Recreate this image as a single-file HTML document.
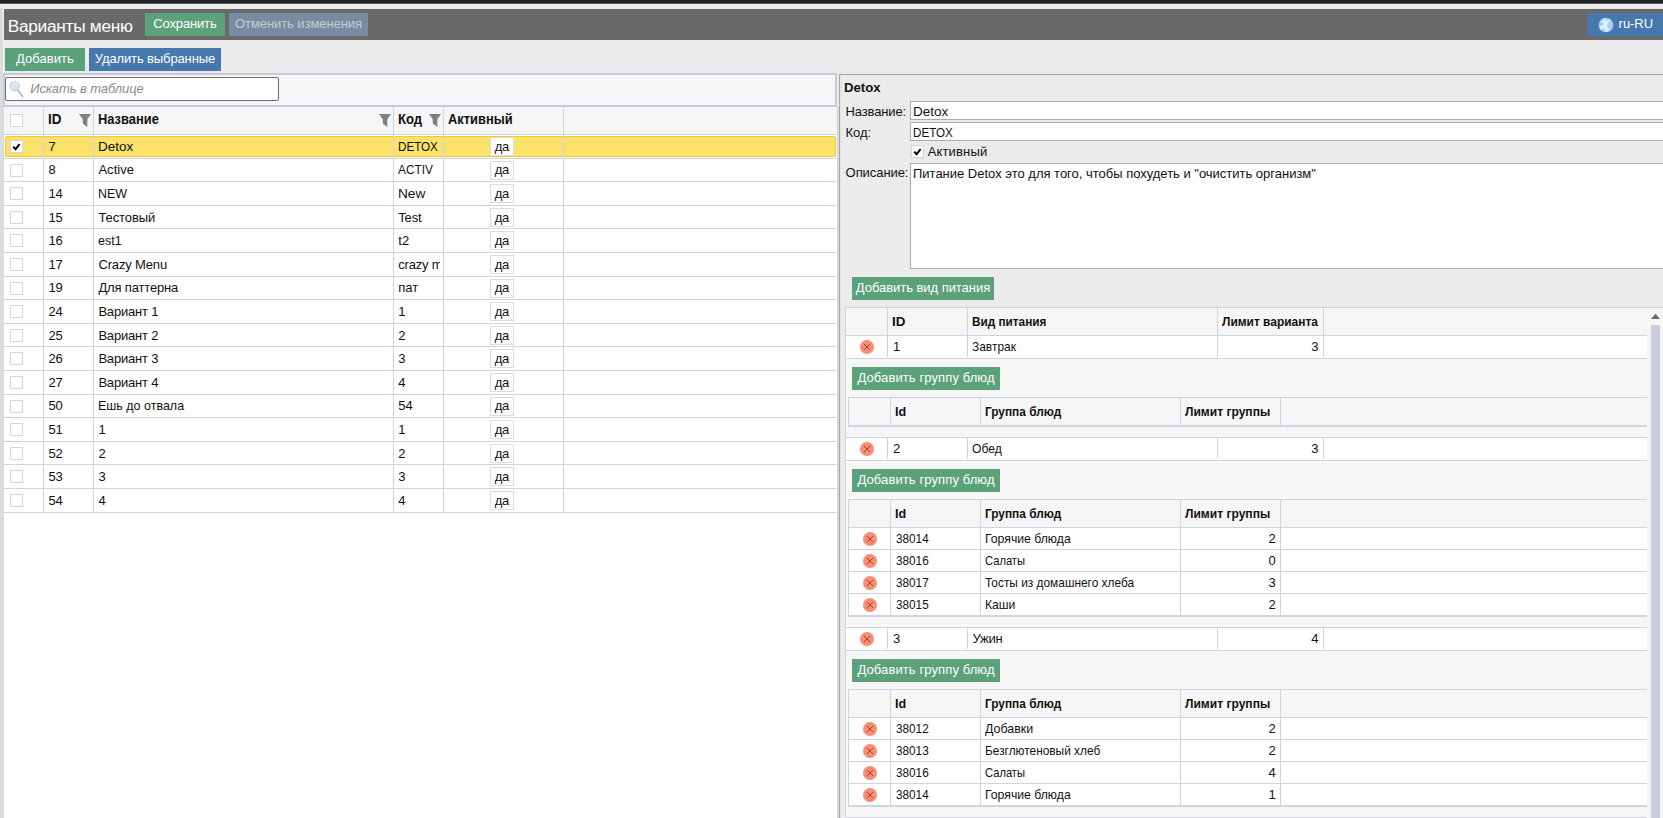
<!DOCTYPE html>
<html lang="ru"><head><meta charset="utf-8"><title>Варианты меню</title>
<style>
html,body{margin:0;padding:0}
body{width:1663px;height:818px;overflow:hidden;position:relative;background:#ebebeb;font-family:"Liberation Sans", sans-serif;font-size:13px;color:#111}
body div,body svg{position:absolute}
.t{white-space:nowrap;font-size:13px;line-height:15.6px}
</style></head><body>
<div style="left:0px;top:0px;width:1663px;height:3px;background:#202427;"></div>
<div style="left:0px;top:3px;width:1663px;height:1px;background:#505356;"></div>
<div style="left:0px;top:4px;width:1663px;height:1px;background:#f7f7f7;"></div>
<div style="left:0px;top:8px;width:3px;height:810px;background:#dcdcdc;"></div>
<div style="left:3px;top:8px;width:1px;height:65px;background:#f3f3f3;"></div>
<div style="left:4px;top:9px;width:1659px;height:31px;background:#696969;"></div>
<div class="t" style="top:15.63px;line-height:20.76px;font-size:17.3px;left:7.7px;color:#fff;letter-spacing:-0.284px;">Варианты меню</div>
<div style="left:145px;top:13px;width:80px;height:23px;background:#5ba17a;"></div>
<div class="t" style="top:16px;left:145px;width:80px;text-align:center;text-indent:-0.151px;color:#fff;letter-spacing:-0.151px;">Сохранить</div>
<div style="left:229px;top:13px;width:139px;height:23px;background:#798ba2;"></div>
<div class="t" style="top:16px;left:229px;width:139px;text-align:center;text-indent:-0.07px;color:#c6cad2;letter-spacing:-0.07px;">Отменить изменения</div>
<div style="left:1587px;top:13px;width:76px;height:23px;background:#4677ad;"></div>
<svg style="left:1598px;top:16.65px" width="16" height="16" viewBox="0 0 16 16"><circle cx="8" cy="8" r="7.3" fill="#9dcffb"/><path d="M5.56 1.89 L7.27 1.89 L7.51 4.09 L8.24 4.58 L9.71 3.11 L11.18 2.87 L11.42 3.84 L10.2 5.8 L9.22 8 L8.73 9.47 L10.2 10.93 L11.18 12.4 L10.2 13.87 L8.24 14.6 L6.78 14.36 L7.51 12.4 L6.29 11.42 L4.58 10.93 L3.6 11.42 L3.84 12.89 L2.87 12.4 L1.64 10.44 L2.62 9.22 L4.33 8.49 L5.8 7.02 L6.29 5.8 L4.82 5.31 L3.6 5.56 L3.6 4.58 L4.82 3.6 Z" fill="#e2f1fd" stroke="#e2f1fd" stroke-width="0.5" stroke-linejoin="round"/></svg>
<div class="t" style="top:16px;left:1618.6px;color:#fff;letter-spacing:-0.043px;">ru-RU</div>
<div style="left:5px;top:48px;width:80px;height:23px;background:#5ba17a;"></div>
<div class="t" style="top:51px;left:5px;width:80px;text-align:center;text-indent:0.05px;color:#fff;letter-spacing:0.05px;">Добавить</div>
<div style="left:89px;top:48px;width:132px;height:23px;background:#4677ad;"></div>
<div class="t" style="top:51px;left:89px;width:132px;text-align:center;text-indent:-0.121px;color:#fff;letter-spacing:-0.121px;">Удалить выбранные</div>
<div style="left:4px;top:73px;width:833px;height:745px;background:#fff;"></div>
<div style="left:3px;top:73px;width:834px;height:34px;background:#f6f6f6;box-sizing:border-box;border:2px solid #c7cbdd;"></div>
<div style="left:5px;top:77px;width:274px;height:24px;background:#fff;box-sizing:border-box;border:1px solid #6f6f6f;border-radius:2px;"></div>
<svg style="left:8px;top:79px" width="18" height="20" viewBox="0 0 18 20"><path d="M9.5 10.5 L14.5 17.5" stroke="#b9b9b9" stroke-width="1.8" stroke-linecap="round"/><circle cx="6.7" cy="7.1" r="4.6" fill="#d8e8f6" stroke="#c6c9cc" stroke-width="1.1"/></svg>
<div class="t" style="top:81px;left:30.2px;color:#8a8a8a;letter-spacing:-0.094px;font-style:italic;">Искать в таблице</div>
<div style="left:4px;top:107px;width:833px;height:27px;background:#f6f6f6;"></div>
<div style="left:4px;top:134px;width:832px;height:1px;background:#d0d3e2;"></div>
<div style="left:3px;top:107px;width:1px;height:711px;background:#d6d9e7;"></div>
<div style="left:837px;top:107px;width:1px;height:711px;background:#cdd0e0;"></div>
<div style="left:838px;top:107px;width:1px;height:711px;background:#dddddd;"></div>
<div style="left:10px;top:114px;width:11px;height:11px;background:#fff;border:1px solid #d3d5e2;"></div>
<div class="t" style="top:110.75px;line-height:16.8px;font-size:14px;left:48.4px;font-weight:bold;transform:scaleX(0.9571);transform-origin:0 0;">ID</div>
<svg style="left:79px;top:114px" width="13" height="14" viewBox="0 0 13 14"><path d="M0 0 H12 L8.3 5.2 V13 L3.8 9.6 V5.2 Z" fill="#7f7f7f"/></svg>
<div class="t" style="top:110.75px;line-height:16.8px;font-size:14px;left:97.8px;font-weight:bold;transform:scaleX(0.9199);transform-origin:0 0;">Название</div>
<svg style="left:379px;top:114px" width="13" height="14" viewBox="0 0 13 14"><path d="M0 0 H12 L8.3 5.2 V13 L3.8 9.6 V5.2 Z" fill="#7f7f7f"/></svg>
<div class="t" style="top:110.75px;line-height:16.8px;font-size:14px;left:397.8px;font-weight:bold;transform:scaleX(0.9375);transform-origin:0 0;">Код</div>
<svg style="left:429px;top:114px" width="13" height="14" viewBox="0 0 13 14"><path d="M0 0 H12 L8.3 5.2 V13 L3.8 9.6 V5.2 Z" fill="#7f7f7f"/></svg>
<div class="t" style="top:110.75px;line-height:16.8px;font-size:14px;left:447.6px;font-weight:bold;transform:scaleX(0.92);transform-origin:0 0;">Активный</div>
<div style="left:5px;top:136px;width:831px;height:21px;background:#fbe36b;box-sizing:border-box;border:1px solid #fcc52f;border-radius:2px;"></div>
<div style="left:4px;top:158px;width:832px;height:1px;background:#d0d3e2;"></div>
<div style="left:10px;top:140px;width:11px;height:11px;background:#fff;border:1px solid #d3d5e2;"><svg width="13" height="13" viewBox="0 0 13 13" style="left:-1px;top:-1px"><path d="M3.2 6.6 L5.6 9.2 L9.6 4.2" stroke="#000" stroke-width="2" fill="none"/></svg></div>
<div class="t" style="top:139px;left:48.4px;">7</div>
<div class="t" style="top:139px;left:98.4px;transform:scaleX(1.0362);transform-origin:0 0;">Detox</div>
<div class="t" style="top:139px;left:398.3px;width:46.91px;overflow:hidden;transform:scaleX(0.8954);transform-origin:0 0;">DETOX</div>
<div style="left:490px;top:137px;width:24px;height:19px;background:#fff;box-sizing:border-box;border:1px solid #dcdcdc;"></div>
<div class="t" style="top:139px;left:490px;width:24px;text-align:center;text-indent:-0.228px;letter-spacing:-0.228px;">да</div>
<div style="left:4px;top:181px;width:832px;height:1px;background:#d0d3e2;"></div>
<div style="left:10px;top:164px;width:11px;height:11px;background:#fff;border:1px solid #d3d5e2;"></div>
<div class="t" style="top:162px;left:48.4px;">8</div>
<div class="t" style="top:162px;left:98.4px;letter-spacing:0.039px;">Active</div>
<div class="t" style="top:162px;left:398.3px;width:46.09px;overflow:hidden;transform:scaleX(0.9113);transform-origin:0 0;">ACTIV</div>
<div style="left:490px;top:161px;width:24px;height:19px;background:#fff;box-sizing:border-box;border:1px solid #dcdcdc;"></div>
<div class="t" style="top:162px;left:490px;width:24px;text-align:center;text-indent:-0.228px;letter-spacing:-0.228px;">да</div>
<div style="left:4px;top:205px;width:832px;height:1px;background:#d0d3e2;"></div>
<div style="left:10px;top:187px;width:11px;height:11px;background:#fff;border:1px solid #d3d5e2;"></div>
<div class="t" style="top:186px;left:48.4px;">14</div>
<div class="t" style="top:186px;left:98.4px;transform:scaleX(0.959);transform-origin:0 0;">NEW</div>
<div class="t" style="top:186px;left:398.3px;width:40.02px;overflow:hidden;transform:scaleX(1.0494);transform-origin:0 0;">New</div>
<div style="left:490px;top:184px;width:24px;height:19px;background:#fff;box-sizing:border-box;border:1px solid #dcdcdc;"></div>
<div class="t" style="top:186px;left:490px;width:24px;text-align:center;text-indent:-0.228px;letter-spacing:-0.228px;">да</div>
<div style="left:4px;top:228px;width:832px;height:1px;background:#d0d3e2;"></div>
<div style="left:10px;top:211px;width:11px;height:11px;background:#fff;border:1px solid #d3d5e2;"></div>
<div class="t" style="top:210px;left:48.4px;">15</div>
<div class="t" style="top:210px;left:98.4px;letter-spacing:-0.086px;">Тестовый</div>
<div class="t" style="top:210px;left:398.3px;width:42.0px;overflow:hidden;letter-spacing:-0.181px;">Test</div>
<div style="left:490px;top:208px;width:24px;height:19px;background:#fff;box-sizing:border-box;border:1px solid #dcdcdc;"></div>
<div class="t" style="top:210px;left:490px;width:24px;text-align:center;text-indent:-0.228px;letter-spacing:-0.228px;">да</div>
<div style="left:4px;top:252px;width:832px;height:1px;background:#d0d3e2;"></div>
<div style="left:10px;top:234px;width:11px;height:11px;background:#fff;border:1px solid #d3d5e2;"></div>
<div class="t" style="top:233px;left:48.4px;">16</div>
<div class="t" style="top:233px;left:98.4px;transform:scaleX(0.9602);transform-origin:0 0;">est1</div>
<div class="t" style="top:233px;left:398.3px;width:42.0px;overflow:hidden;">t2</div>
<div style="left:490px;top:231px;width:24px;height:19px;background:#fff;box-sizing:border-box;border:1px solid #dcdcdc;"></div>
<div class="t" style="top:233px;left:490px;width:24px;text-align:center;text-indent:-0.228px;letter-spacing:-0.228px;">да</div>
<div style="left:4px;top:276px;width:832px;height:1px;background:#d0d3e2;"></div>
<div style="left:10px;top:258px;width:11px;height:11px;background:#fff;border:1px solid #d3d5e2;"></div>
<div class="t" style="top:257px;left:48.4px;">17</div>
<div class="t" style="top:257px;left:98.4px;letter-spacing:-0.142px;">Crazy Menu</div>
<div class="t" style="top:257px;left:398.3px;width:42.0px;overflow:hidden;letter-spacing:-0.217px;">crazy m</div>
<div style="left:490px;top:255px;width:24px;height:19px;background:#fff;box-sizing:border-box;border:1px solid #dcdcdc;"></div>
<div class="t" style="top:257px;left:490px;width:24px;text-align:center;text-indent:-0.228px;letter-spacing:-0.228px;">да</div>
<div style="left:4px;top:299px;width:832px;height:1px;background:#d0d3e2;"></div>
<div style="left:10px;top:282px;width:11px;height:11px;background:#fff;border:1px solid #d3d5e2;"></div>
<div class="t" style="top:280px;left:48.4px;">19</div>
<div class="t" style="top:280px;left:98.4px;letter-spacing:-0.16px;">Для паттерна</div>
<div class="t" style="top:280px;left:398.3px;width:42.0px;overflow:hidden;">пат</div>
<div style="left:490px;top:279px;width:24px;height:19px;background:#fff;box-sizing:border-box;border:1px solid #dcdcdc;"></div>
<div class="t" style="top:280px;left:490px;width:24px;text-align:center;text-indent:-0.228px;letter-spacing:-0.228px;">да</div>
<div style="left:4px;top:323px;width:832px;height:1px;background:#d0d3e2;"></div>
<div style="left:10px;top:305px;width:11px;height:11px;background:#fff;border:1px solid #d3d5e2;"></div>
<div class="t" style="top:304px;left:48.4px;">24</div>
<div class="t" style="top:304px;left:98.4px;letter-spacing:-0.189px;">Вариант 1</div>
<div class="t" style="top:304px;left:398.3px;width:42.0px;overflow:hidden;">1</div>
<div style="left:490px;top:302px;width:24px;height:19px;background:#fff;box-sizing:border-box;border:1px solid #dcdcdc;"></div>
<div class="t" style="top:304px;left:490px;width:24px;text-align:center;text-indent:-0.228px;letter-spacing:-0.228px;">да</div>
<div style="left:4px;top:346px;width:832px;height:1px;background:#d0d3e2;"></div>
<div style="left:10px;top:329px;width:11px;height:11px;background:#fff;border:1px solid #d3d5e2;"></div>
<div class="t" style="top:328px;left:48.4px;">25</div>
<div class="t" style="top:328px;left:98.4px;letter-spacing:-0.189px;">Вариант 2</div>
<div class="t" style="top:328px;left:398.3px;width:42.0px;overflow:hidden;">2</div>
<div style="left:490px;top:326px;width:24px;height:19px;background:#fff;box-sizing:border-box;border:1px solid #dcdcdc;"></div>
<div class="t" style="top:328px;left:490px;width:24px;text-align:center;text-indent:-0.228px;letter-spacing:-0.228px;">да</div>
<div style="left:4px;top:370px;width:832px;height:1px;background:#d0d3e2;"></div>
<div style="left:10px;top:352px;width:11px;height:11px;background:#fff;border:1px solid #d3d5e2;"></div>
<div class="t" style="top:351px;left:48.4px;">26</div>
<div class="t" style="top:351px;left:98.4px;letter-spacing:-0.189px;">Вариант 3</div>
<div class="t" style="top:351px;left:398.3px;width:42.0px;overflow:hidden;">3</div>
<div style="left:490px;top:349px;width:24px;height:19px;background:#fff;box-sizing:border-box;border:1px solid #dcdcdc;"></div>
<div class="t" style="top:351px;left:490px;width:24px;text-align:center;text-indent:-0.228px;letter-spacing:-0.228px;">да</div>
<div style="left:4px;top:394px;width:832px;height:1px;background:#d0d3e2;"></div>
<div style="left:10px;top:376px;width:11px;height:11px;background:#fff;border:1px solid #d3d5e2;"></div>
<div class="t" style="top:375px;left:48.4px;">27</div>
<div class="t" style="top:375px;left:98.4px;letter-spacing:-0.189px;">Вариант 4</div>
<div class="t" style="top:375px;left:398.3px;width:42.0px;overflow:hidden;">4</div>
<div style="left:490px;top:373px;width:24px;height:19px;background:#fff;box-sizing:border-box;border:1px solid #dcdcdc;"></div>
<div class="t" style="top:375px;left:490px;width:24px;text-align:center;text-indent:-0.228px;letter-spacing:-0.228px;">да</div>
<div style="left:4px;top:417px;width:832px;height:1px;background:#d0d3e2;"></div>
<div style="left:10px;top:400px;width:11px;height:11px;background:#fff;border:1px solid #d3d5e2;"></div>
<div class="t" style="top:398px;left:48.4px;">50</div>
<div class="t" style="top:398px;left:98.4px;transform:scaleX(0.9607);transform-origin:0 0;">Ешь до отвала</div>
<div class="t" style="top:398px;left:398.3px;width:42.0px;overflow:hidden;">54</div>
<div style="left:490px;top:397px;width:24px;height:19px;background:#fff;box-sizing:border-box;border:1px solid #dcdcdc;"></div>
<div class="t" style="top:398px;left:490px;width:24px;text-align:center;text-indent:-0.228px;letter-spacing:-0.228px;">да</div>
<div style="left:4px;top:441px;width:832px;height:1px;background:#d0d3e2;"></div>
<div style="left:10px;top:423px;width:11px;height:11px;background:#fff;border:1px solid #d3d5e2;"></div>
<div class="t" style="top:422px;left:48.4px;">51</div>
<div class="t" style="top:422px;left:98.4px;">1</div>
<div class="t" style="top:422px;left:398.3px;width:42.0px;overflow:hidden;">1</div>
<div style="left:490px;top:420px;width:24px;height:19px;background:#fff;box-sizing:border-box;border:1px solid #dcdcdc;"></div>
<div class="t" style="top:422px;left:490px;width:24px;text-align:center;text-indent:-0.228px;letter-spacing:-0.228px;">да</div>
<div style="left:4px;top:464px;width:832px;height:1px;background:#d0d3e2;"></div>
<div style="left:10px;top:447px;width:11px;height:11px;background:#fff;border:1px solid #d3d5e2;"></div>
<div class="t" style="top:446px;left:48.4px;">52</div>
<div class="t" style="top:446px;left:98.4px;">2</div>
<div class="t" style="top:446px;left:398.3px;width:42.0px;overflow:hidden;">2</div>
<div style="left:490px;top:444px;width:24px;height:19px;background:#fff;box-sizing:border-box;border:1px solid #dcdcdc;"></div>
<div class="t" style="top:446px;left:490px;width:24px;text-align:center;text-indent:-0.228px;letter-spacing:-0.228px;">да</div>
<div style="left:4px;top:488px;width:832px;height:1px;background:#d0d3e2;"></div>
<div style="left:10px;top:470px;width:11px;height:11px;background:#fff;border:1px solid #d3d5e2;"></div>
<div class="t" style="top:469px;left:48.4px;">53</div>
<div class="t" style="top:469px;left:98.4px;">3</div>
<div class="t" style="top:469px;left:398.3px;width:42.0px;overflow:hidden;">3</div>
<div style="left:490px;top:467px;width:24px;height:19px;background:#fff;box-sizing:border-box;border:1px solid #dcdcdc;"></div>
<div class="t" style="top:469px;left:490px;width:24px;text-align:center;text-indent:-0.228px;letter-spacing:-0.228px;">да</div>
<div style="left:4px;top:512px;width:832px;height:1px;background:#d0d3e2;"></div>
<div style="left:10px;top:494px;width:11px;height:11px;background:#fff;border:1px solid #d3d5e2;"></div>
<div class="t" style="top:493px;left:48.4px;">54</div>
<div class="t" style="top:493px;left:98.4px;">4</div>
<div class="t" style="top:493px;left:398.3px;width:42.0px;overflow:hidden;">4</div>
<div style="left:490px;top:491px;width:24px;height:19px;background:#fff;box-sizing:border-box;border:1px solid #dcdcdc;"></div>
<div class="t" style="top:493px;left:490px;width:24px;text-align:center;text-indent:-0.228px;letter-spacing:-0.228px;">да</div>
<div style="left:43px;top:107px;width:1px;height:406px;background:#d0d3e2;"></div>
<div style="left:93px;top:107px;width:1px;height:406px;background:#d0d3e2;"></div>
<div style="left:393px;top:107px;width:1px;height:406px;background:#d0d3e2;"></div>
<div style="left:443px;top:107px;width:1px;height:406px;background:#d0d3e2;"></div>
<div style="left:563px;top:107px;width:1px;height:406px;background:#d0d3e2;"></div>
<div style="left:839px;top:74px;width:824px;height:744px;background:#ebebeb;box-sizing:border-box;border-left:1px solid #a6a6a6;border-top:1px solid #a6a6a6;"></div>
<div style="left:840px;top:75px;width:1px;height:743px;background:#e2e2e2;"></div>
<div class="t" style="top:80px;left:844.3000000000001px;font-weight:bold;transform:scaleX(1.0131);transform-origin:0 0;">Detox</div>
<div class="t" style="top:104px;left:845.6px;letter-spacing:-0.14px;">Название:</div>
<div style="left:910px;top:101px;width:760px;height:19px;background:#fff;box-sizing:border-box;border:1px solid #a9abb4;"></div>
<div class="t" style="top:104px;left:913px;transform:scaleX(1.0362);transform-origin:0 0;">Detox</div>
<div class="t" style="top:125px;left:845.6px;letter-spacing:-0.106px;">Код:</div>
<div style="left:910px;top:122px;width:760px;height:19px;background:#fff;box-sizing:border-box;border:1px solid #a9abb4;"></div>
<div class="t" style="top:125px;left:913px;transform:scaleX(0.8954);transform-origin:0 0;">DETOX</div>
<div style="left:911px;top:145px;width:11px;height:11px;background:#fff;border:1px solid #d4d4d4;"><svg width="13" height="13" viewBox="0 0 13 13" style="left:-1px;top:-1px"><path d="M3.2 6.6 L5.6 9.2 L9.6 4.2" stroke="#000" stroke-width="2" fill="none"/></svg></div>
<div class="t" style="top:144px;left:927.7px;letter-spacing:0.154px;">Активный</div>
<div class="t" style="top:165px;left:845.6px;letter-spacing:-0.067px;">Описание:</div>
<div style="left:910px;top:163px;width:760px;height:106px;background:#fff;box-sizing:border-box;border:1px solid #a9abb4;"></div>
<div class="t" style="top:166px;left:913px;letter-spacing:-0.01px;">Питание Detox это для того, чтобы похудеть и "очистить организм"</div>
<div style="left:852px;top:277px;width:142px;height:23px;background:#5ba17a;"></div>
<div class="t" style="top:280px;left:852px;width:142px;text-align:center;text-indent:-0.045px;color:#fff;letter-spacing:-0.045px;">Добавить вид питания</div>
<div style="left:845px;top:307px;width:818px;height:511px;background:#f6f6f6;"></div>
<div style="left:845px;top:307px;width:818px;height:1px;background:#d0d3e2;"></div>
<div style="left:845px;top:307px;width:1px;height:511px;background:#d0d3e2;"></div>
<div style="left:846px;top:335px;width:801px;height:1px;background:#d0d3e2;"></div>
<div style="left:887px;top:308px;width:1px;height:27px;background:#d0d3e2;"></div>
<div style="left:967px;top:308px;width:1px;height:27px;background:#d0d3e2;"></div>
<div style="left:1217px;top:308px;width:1px;height:27px;background:#d0d3e2;"></div>
<div style="left:1323px;top:308px;width:1px;height:27px;background:#d0d3e2;"></div>
<div class="t" style="top:314px;left:892.4px;font-weight:bold;transform:scaleX(1.0308);transform-origin:0 0;">ID</div>
<div class="t" style="top:314px;left:972.4px;font-weight:bold;transform:scaleX(0.9059);transform-origin:0 0;">Вид питания</div>
<div class="t" style="top:314px;left:1222.1px;font-weight:bold;transform:scaleX(0.9198);transform-origin:0 0;">Лимит варианта</div>
<div style="left:846px;top:335px;width:801px;height:1px;background:#d0d3e2;"></div>
<div style="left:846px;top:336px;width:801px;height:22px;background:#fff;"></div>
<div style="left:846px;top:358px;width:801px;height:1px;background:#d0d3e2;"></div>
<div style="left:887px;top:336px;width:1px;height:21px;background:#d0d3e2;"></div>
<div style="left:967px;top:336px;width:1px;height:21px;background:#d0d3e2;"></div>
<div style="left:1217px;top:336px;width:1px;height:21px;background:#d0d3e2;"></div>
<div style="left:1323px;top:336px;width:1px;height:21px;background:#d0d3e2;"></div>
<svg style="left:859px;top:339px" width="16" height="16" viewBox="0 0 16 16"><circle cx="8" cy="8" r="7" fill="#fb8c73"/><path d="M5 5 L11 11 M11 5 L5 11" stroke="#8a4a3c" stroke-width="1" fill="none"/></svg>
<div class="t" style="top:339px;left:893px;">1</div>
<div class="t" style="top:339px;left:972.4px;transform:scaleX(0.9182);transform-origin:0 0;">Завтрак</div>
<div class="t" style="top:339px;left:1018.4000000000001px;width:300px;text-align:right;">3</div>
<div style="left:852px;top:367px;width:148px;height:23px;background:#5ba17a;"></div>
<div class="t" style="top:370px;left:852px;width:148px;text-align:center;text-indent:0.106px;color:#fff;letter-spacing:0.106px;">Добавить группу блюд</div>
<div style="left:848px;top:397px;width:799px;height:1px;background:#d0d3e2;"></div>
<div style="left:848px;top:397px;width:1px;height:30px;background:#d0d3e2;"></div>
<div style="left:890px;top:398px;width:1px;height:27px;background:#d0d3e2;"></div>
<div style="left:980px;top:398px;width:1px;height:27px;background:#d0d3e2;"></div>
<div style="left:1180px;top:398px;width:1px;height:27px;background:#d0d3e2;"></div>
<div style="left:1280px;top:398px;width:1px;height:27px;background:#d0d3e2;"></div>
<div class="t" style="top:404px;left:895.3000000000001px;font-weight:bold;transform:scaleX(0.9686);transform-origin:0 0;">Id</div>
<div class="t" style="top:404px;left:985.2px;font-weight:bold;transform:scaleX(0.9117);transform-origin:0 0;">Группа блюд</div>
<div class="t" style="top:404px;left:1185.1px;font-weight:bold;transform:scaleX(0.9269);transform-origin:0 0;">Лимит группы</div>
<div style="left:848px;top:425px;width:799px;height:1px;background:#d0d3e2;"></div>
<div style="left:848px;top:426px;width:799px;height:1px;background:#d0d3e2;"></div>
<div style="left:846px;top:437px;width:801px;height:1px;background:#d0d3e2;"></div>
<div style="left:846px;top:438px;width:801px;height:22px;background:#fff;"></div>
<div style="left:846px;top:460px;width:801px;height:1px;background:#d0d3e2;"></div>
<div style="left:887px;top:438px;width:1px;height:21px;background:#d0d3e2;"></div>
<div style="left:967px;top:438px;width:1px;height:21px;background:#d0d3e2;"></div>
<div style="left:1217px;top:438px;width:1px;height:21px;background:#d0d3e2;"></div>
<div style="left:1323px;top:438px;width:1px;height:21px;background:#d0d3e2;"></div>
<svg style="left:859px;top:441px" width="16" height="16" viewBox="0 0 16 16"><circle cx="8" cy="8" r="7" fill="#fb8c73"/><path d="M5 5 L11 11 M11 5 L5 11" stroke="#8a4a3c" stroke-width="1" fill="none"/></svg>
<div class="t" style="top:441px;left:893px;">2</div>
<div class="t" style="top:441px;left:972.4px;transform:scaleX(0.9326);transform-origin:0 0;">Обед</div>
<div class="t" style="top:441px;left:1018.4000000000001px;width:300px;text-align:right;">3</div>
<div style="left:852px;top:469px;width:148px;height:23px;background:#5ba17a;"></div>
<div class="t" style="top:472px;left:852px;width:148px;text-align:center;text-indent:0.106px;color:#fff;letter-spacing:0.106px;">Добавить группу блюд</div>
<div style="left:848px;top:499px;width:799px;height:1px;background:#d0d3e2;"></div>
<div style="left:848px;top:499px;width:1px;height:118px;background:#d0d3e2;"></div>
<div style="left:890px;top:500px;width:1px;height:27px;background:#d0d3e2;"></div>
<div style="left:980px;top:500px;width:1px;height:27px;background:#d0d3e2;"></div>
<div style="left:1180px;top:500px;width:1px;height:27px;background:#d0d3e2;"></div>
<div style="left:1280px;top:500px;width:1px;height:27px;background:#d0d3e2;"></div>
<div class="t" style="top:506px;left:895.3000000000001px;font-weight:bold;transform:scaleX(0.9686);transform-origin:0 0;">Id</div>
<div class="t" style="top:506px;left:985.2px;font-weight:bold;transform:scaleX(0.9117);transform-origin:0 0;">Группа блюд</div>
<div class="t" style="top:506px;left:1185.1px;font-weight:bold;transform:scaleX(0.9269);transform-origin:0 0;">Лимит группы</div>
<div style="left:848px;top:527px;width:799px;height:1px;background:#d0d3e2;"></div>
<div style="left:849px;top:528px;width:798px;height:21px;background:#fff;"></div>
<div style="left:848px;top:549px;width:799px;height:1px;background:#d0d3e2;"></div>
<div style="left:890px;top:528px;width:1px;height:21px;background:#d0d3e2;"></div>
<div style="left:980px;top:528px;width:1px;height:21px;background:#d0d3e2;"></div>
<div style="left:1180px;top:528px;width:1px;height:21px;background:#d0d3e2;"></div>
<div style="left:1280px;top:528px;width:1px;height:21px;background:#d0d3e2;"></div>
<svg style="left:862px;top:531px" width="16" height="16" viewBox="0 0 16 16"><circle cx="8" cy="8" r="7" fill="#fb8c73"/><path d="M5 5 L11 11 M11 5 L5 11" stroke="#8a4a3c" stroke-width="1" fill="none"/></svg>
<div class="t" style="top:531px;left:895.8px;transform:scaleX(0.9044);transform-origin:0 0;">38014</div>
<div class="t" style="top:531px;left:985.3px;transform:scaleX(0.9403);transform-origin:0 0;">Горячие блюда</div>
<div class="t" style="top:531px;left:975.7px;width:300px;text-align:right;">2</div>
<div style="left:849px;top:550px;width:798px;height:21px;background:#fff;"></div>
<div style="left:848px;top:571px;width:799px;height:1px;background:#d0d3e2;"></div>
<div style="left:890px;top:550px;width:1px;height:21px;background:#d0d3e2;"></div>
<div style="left:980px;top:550px;width:1px;height:21px;background:#d0d3e2;"></div>
<div style="left:1180px;top:550px;width:1px;height:21px;background:#d0d3e2;"></div>
<div style="left:1280px;top:550px;width:1px;height:21px;background:#d0d3e2;"></div>
<svg style="left:862px;top:553px" width="16" height="16" viewBox="0 0 16 16"><circle cx="8" cy="8" r="7" fill="#fb8c73"/><path d="M5 5 L11 11 M11 5 L5 11" stroke="#8a4a3c" stroke-width="1" fill="none"/></svg>
<div class="t" style="top:553px;left:895.8px;transform:scaleX(0.9044);transform-origin:0 0;">38016</div>
<div class="t" style="top:553px;left:985.3px;transform:scaleX(0.8585);transform-origin:0 0;">Салаты</div>
<div class="t" style="top:553px;left:975.7px;width:300px;text-align:right;">0</div>
<div style="left:849px;top:572px;width:798px;height:21px;background:#fff;"></div>
<div style="left:848px;top:593px;width:799px;height:1px;background:#d0d3e2;"></div>
<div style="left:890px;top:572px;width:1px;height:21px;background:#d0d3e2;"></div>
<div style="left:980px;top:572px;width:1px;height:21px;background:#d0d3e2;"></div>
<div style="left:1180px;top:572px;width:1px;height:21px;background:#d0d3e2;"></div>
<div style="left:1280px;top:572px;width:1px;height:21px;background:#d0d3e2;"></div>
<svg style="left:862px;top:575px" width="16" height="16" viewBox="0 0 16 16"><circle cx="8" cy="8" r="7" fill="#fb8c73"/><path d="M5 5 L11 11 M11 5 L5 11" stroke="#8a4a3c" stroke-width="1" fill="none"/></svg>
<div class="t" style="top:575px;left:895.8px;transform:scaleX(0.9044);transform-origin:0 0;">38017</div>
<div class="t" style="top:575px;left:985.3px;transform:scaleX(0.9143);transform-origin:0 0;">Тосты из домашнего хлеба</div>
<div class="t" style="top:575px;left:975.7px;width:300px;text-align:right;">3</div>
<div style="left:849px;top:594px;width:798px;height:21px;background:#fff;"></div>
<div style="left:848px;top:615px;width:799px;height:1px;background:#d0d3e2;"></div>
<div style="left:890px;top:594px;width:1px;height:21px;background:#d0d3e2;"></div>
<div style="left:980px;top:594px;width:1px;height:21px;background:#d0d3e2;"></div>
<div style="left:1180px;top:594px;width:1px;height:21px;background:#d0d3e2;"></div>
<div style="left:1280px;top:594px;width:1px;height:21px;background:#d0d3e2;"></div>
<svg style="left:862px;top:597px" width="16" height="16" viewBox="0 0 16 16"><circle cx="8" cy="8" r="7" fill="#fb8c73"/><path d="M5 5 L11 11 M11 5 L5 11" stroke="#8a4a3c" stroke-width="1" fill="none"/></svg>
<div class="t" style="top:597px;left:895.8px;transform:scaleX(0.9044);transform-origin:0 0;">38015</div>
<div class="t" style="top:597px;left:985.3px;transform:scaleX(0.9354);transform-origin:0 0;">Каши</div>
<div class="t" style="top:597px;left:975.7px;width:300px;text-align:right;">2</div>
<div style="left:848px;top:616px;width:799px;height:1px;background:#d0d3e2;"></div>
<div style="left:846px;top:627px;width:801px;height:1px;background:#d0d3e2;"></div>
<div style="left:846px;top:628px;width:801px;height:22px;background:#fff;"></div>
<div style="left:846px;top:650px;width:801px;height:1px;background:#d0d3e2;"></div>
<div style="left:887px;top:628px;width:1px;height:21px;background:#d0d3e2;"></div>
<div style="left:967px;top:628px;width:1px;height:21px;background:#d0d3e2;"></div>
<div style="left:1217px;top:628px;width:1px;height:21px;background:#d0d3e2;"></div>
<div style="left:1323px;top:628px;width:1px;height:21px;background:#d0d3e2;"></div>
<svg style="left:859px;top:631px" width="16" height="16" viewBox="0 0 16 16"><circle cx="8" cy="8" r="7" fill="#fb8c73"/><path d="M5 5 L11 11 M11 5 L5 11" stroke="#8a4a3c" stroke-width="1" fill="none"/></svg>
<div class="t" style="top:631px;left:893px;">3</div>
<div class="t" style="top:631px;left:972.4px;letter-spacing:-0.19px;">Ужин</div>
<div class="t" style="top:631px;left:1018.4000000000001px;width:300px;text-align:right;">4</div>
<div style="left:852px;top:659px;width:148px;height:23px;background:#5ba17a;"></div>
<div class="t" style="top:662px;left:852px;width:148px;text-align:center;text-indent:0.106px;color:#fff;letter-spacing:0.106px;">Добавить группу блюд</div>
<div style="left:848px;top:689px;width:799px;height:1px;background:#d0d3e2;"></div>
<div style="left:848px;top:689px;width:1px;height:118px;background:#d0d3e2;"></div>
<div style="left:890px;top:690px;width:1px;height:27px;background:#d0d3e2;"></div>
<div style="left:980px;top:690px;width:1px;height:27px;background:#d0d3e2;"></div>
<div style="left:1180px;top:690px;width:1px;height:27px;background:#d0d3e2;"></div>
<div style="left:1280px;top:690px;width:1px;height:27px;background:#d0d3e2;"></div>
<div class="t" style="top:696px;left:895.3000000000001px;font-weight:bold;transform:scaleX(0.9686);transform-origin:0 0;">Id</div>
<div class="t" style="top:696px;left:985.2px;font-weight:bold;transform:scaleX(0.9117);transform-origin:0 0;">Группа блюд</div>
<div class="t" style="top:696px;left:1185.1px;font-weight:bold;transform:scaleX(0.9269);transform-origin:0 0;">Лимит группы</div>
<div style="left:848px;top:717px;width:799px;height:1px;background:#d0d3e2;"></div>
<div style="left:849px;top:718px;width:798px;height:21px;background:#fff;"></div>
<div style="left:848px;top:739px;width:799px;height:1px;background:#d0d3e2;"></div>
<div style="left:890px;top:718px;width:1px;height:21px;background:#d0d3e2;"></div>
<div style="left:980px;top:718px;width:1px;height:21px;background:#d0d3e2;"></div>
<div style="left:1180px;top:718px;width:1px;height:21px;background:#d0d3e2;"></div>
<div style="left:1280px;top:718px;width:1px;height:21px;background:#d0d3e2;"></div>
<svg style="left:862px;top:721px" width="16" height="16" viewBox="0 0 16 16"><circle cx="8" cy="8" r="7" fill="#fb8c73"/><path d="M5 5 L11 11 M11 5 L5 11" stroke="#8a4a3c" stroke-width="1" fill="none"/></svg>
<div class="t" style="top:721px;left:895.8px;transform:scaleX(0.9044);transform-origin:0 0;">38012</div>
<div class="t" style="top:721px;left:985.3px;transform:scaleX(0.954);transform-origin:0 0;">Добавки</div>
<div class="t" style="top:721px;left:975.7px;width:300px;text-align:right;">2</div>
<div style="left:849px;top:740px;width:798px;height:21px;background:#fff;"></div>
<div style="left:848px;top:761px;width:799px;height:1px;background:#d0d3e2;"></div>
<div style="left:890px;top:740px;width:1px;height:21px;background:#d0d3e2;"></div>
<div style="left:980px;top:740px;width:1px;height:21px;background:#d0d3e2;"></div>
<div style="left:1180px;top:740px;width:1px;height:21px;background:#d0d3e2;"></div>
<div style="left:1280px;top:740px;width:1px;height:21px;background:#d0d3e2;"></div>
<svg style="left:862px;top:743px" width="16" height="16" viewBox="0 0 16 16"><circle cx="8" cy="8" r="7" fill="#fb8c73"/><path d="M5 5 L11 11 M11 5 L5 11" stroke="#8a4a3c" stroke-width="1" fill="none"/></svg>
<div class="t" style="top:743px;left:895.8px;transform:scaleX(0.9044);transform-origin:0 0;">38013</div>
<div class="t" style="top:743px;left:985.3px;transform:scaleX(0.9133);transform-origin:0 0;">Безглютеновый хлеб</div>
<div class="t" style="top:743px;left:975.7px;width:300px;text-align:right;">2</div>
<div style="left:849px;top:762px;width:798px;height:21px;background:#fff;"></div>
<div style="left:848px;top:783px;width:799px;height:1px;background:#d0d3e2;"></div>
<div style="left:890px;top:762px;width:1px;height:21px;background:#d0d3e2;"></div>
<div style="left:980px;top:762px;width:1px;height:21px;background:#d0d3e2;"></div>
<div style="left:1180px;top:762px;width:1px;height:21px;background:#d0d3e2;"></div>
<div style="left:1280px;top:762px;width:1px;height:21px;background:#d0d3e2;"></div>
<svg style="left:862px;top:765px" width="16" height="16" viewBox="0 0 16 16"><circle cx="8" cy="8" r="7" fill="#fb8c73"/><path d="M5 5 L11 11 M11 5 L5 11" stroke="#8a4a3c" stroke-width="1" fill="none"/></svg>
<div class="t" style="top:765px;left:895.8px;transform:scaleX(0.9044);transform-origin:0 0;">38016</div>
<div class="t" style="top:765px;left:985.3px;transform:scaleX(0.8585);transform-origin:0 0;">Салаты</div>
<div class="t" style="top:765px;left:975.7px;width:300px;text-align:right;">4</div>
<div style="left:849px;top:784px;width:798px;height:21px;background:#fff;"></div>
<div style="left:848px;top:805px;width:799px;height:1px;background:#d0d3e2;"></div>
<div style="left:890px;top:784px;width:1px;height:21px;background:#d0d3e2;"></div>
<div style="left:980px;top:784px;width:1px;height:21px;background:#d0d3e2;"></div>
<div style="left:1180px;top:784px;width:1px;height:21px;background:#d0d3e2;"></div>
<div style="left:1280px;top:784px;width:1px;height:21px;background:#d0d3e2;"></div>
<svg style="left:862px;top:787px" width="16" height="16" viewBox="0 0 16 16"><circle cx="8" cy="8" r="7" fill="#fb8c73"/><path d="M5 5 L11 11 M11 5 L5 11" stroke="#8a4a3c" stroke-width="1" fill="none"/></svg>
<div class="t" style="top:787px;left:895.8px;transform:scaleX(0.9044);transform-origin:0 0;">38014</div>
<div class="t" style="top:787px;left:985.3px;transform:scaleX(0.9403);transform-origin:0 0;">Горячие блюда</div>
<div class="t" style="top:787px;left:975.7px;width:300px;text-align:right;">1</div>
<div style="left:848px;top:806px;width:799px;height:1px;background:#d0d3e2;"></div>
<div style="left:846px;top:817px;width:801px;height:1px;background:#d0d3e2;"></div>
<div style="left:1651px;top:325px;width:9px;height:493px;background:#cbcddc;"></div>
<svg style="left:1650px;top:312px" width="11" height="8" viewBox="0 0 11 8"><path d="M1 7 L5.5 1.8 L10 7 Z" fill="#6a6a6a"/></svg>
</body></html>
